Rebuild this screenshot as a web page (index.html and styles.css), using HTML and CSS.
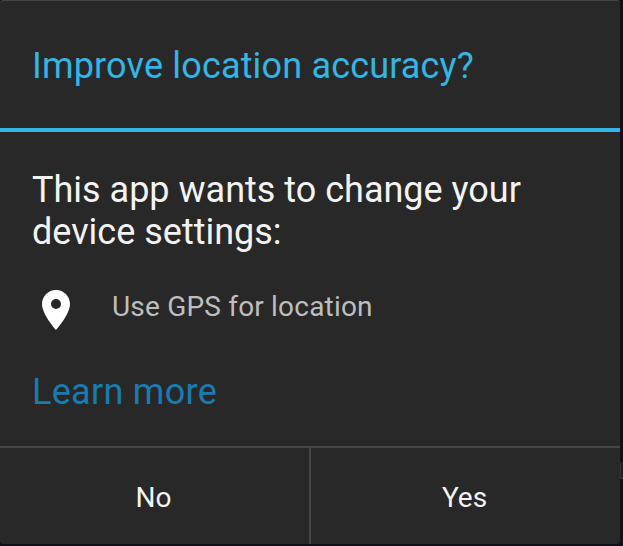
FILE: index.html
```html
<!DOCTYPE html>
<html lang="en">
<head>
<meta charset="utf-8">
<title>Location accuracy</title>
<link rel="stylesheet" href="styles.css">
</head>
<body>
<main class="dialog">
<h1 class="title">Improve location accuracy?</h1>
<section class="content">
<p class="message">This app wants to change your<br>device settings:</p>
<div class="setting">
<svg class="pin" viewBox="0 0 28 40" width="28" height="40"><path fill="#fff" fill-rule="evenodd" d="M14 0C6.3 0 0 6.3 0 14c0 10.500 14 26 14 26s14-15.500 14-26C28 6.300 21.700 0 14 0zm0 9a5 5 0 1 1 0 10 5 5 0 0 1 0-10z"/></svg>
<span class="label">Use GPS for location</span>
</div>
<a class="more">Learn more</a>
</section>
<footer class="actions"><button class="no">No</button><button class="yes">Yes</button></footer>
</main>
<div class="backdrop-edge"></div>
</body>
</html>
```
FILE: styles.css
```css
* { box-sizing: border-box; }
body { margin: 0; width: 623px; height: 546px; overflow: hidden; background: #0f1117; font-family: Roboto, sans-serif; position: relative; }
.dialog { width: 620px; height: 544px; background: #282828; border-top: 1px solid #444; border-radius: 3px; display: flex; flex-direction: column; overflow: hidden; }
.title { margin: 0; height: 131px; flex: none; border-bottom: 4px solid #33b5e5; padding: 44px 0 0 32px; font-size: 36px; line-height: 42px; font-weight: 400; letter-spacing: .17px; color: #33b5e5; white-space: nowrap; }
.content { height: 314px; flex: none; padding: 37px 32px 0; }
.message { margin: 0; font-size: 36px; line-height: 42px; color: #f3f3f3; white-space: nowrap; }
.setting { display: flex; height: 40px; margin-top: 37px; padding-left: 10px; }
.label { margin-left: 42px; font-size: 28px; line-height: 33px; letter-spacing: .19px; color: #bebebe; white-space: nowrap; }
.more { display: block; width: max-content; margin-top: 41px; font-size: 36px; line-height: 42px; letter-spacing: .29px; color: #1a7bb0; }
.actions { display: flex; flex: 1; border-top: 2px solid #464646; }
button { padding: 2px 2px 0 0; border: 0; background: none; font: 28px/33px Roboto, sans-serif; color: #f3f3f3; }
.no { width: 311px; border-right: 2px solid #464646; }
.yes { flex: 1; }
/* sliver of the screen behind the dialog */
.backdrop-edge { position: absolute; left: 620px; top: 462px; width: 3px; height: 17px; border: solid #303238; border-width: 0 0 2px 1px; background: #1d1f25; }
```
